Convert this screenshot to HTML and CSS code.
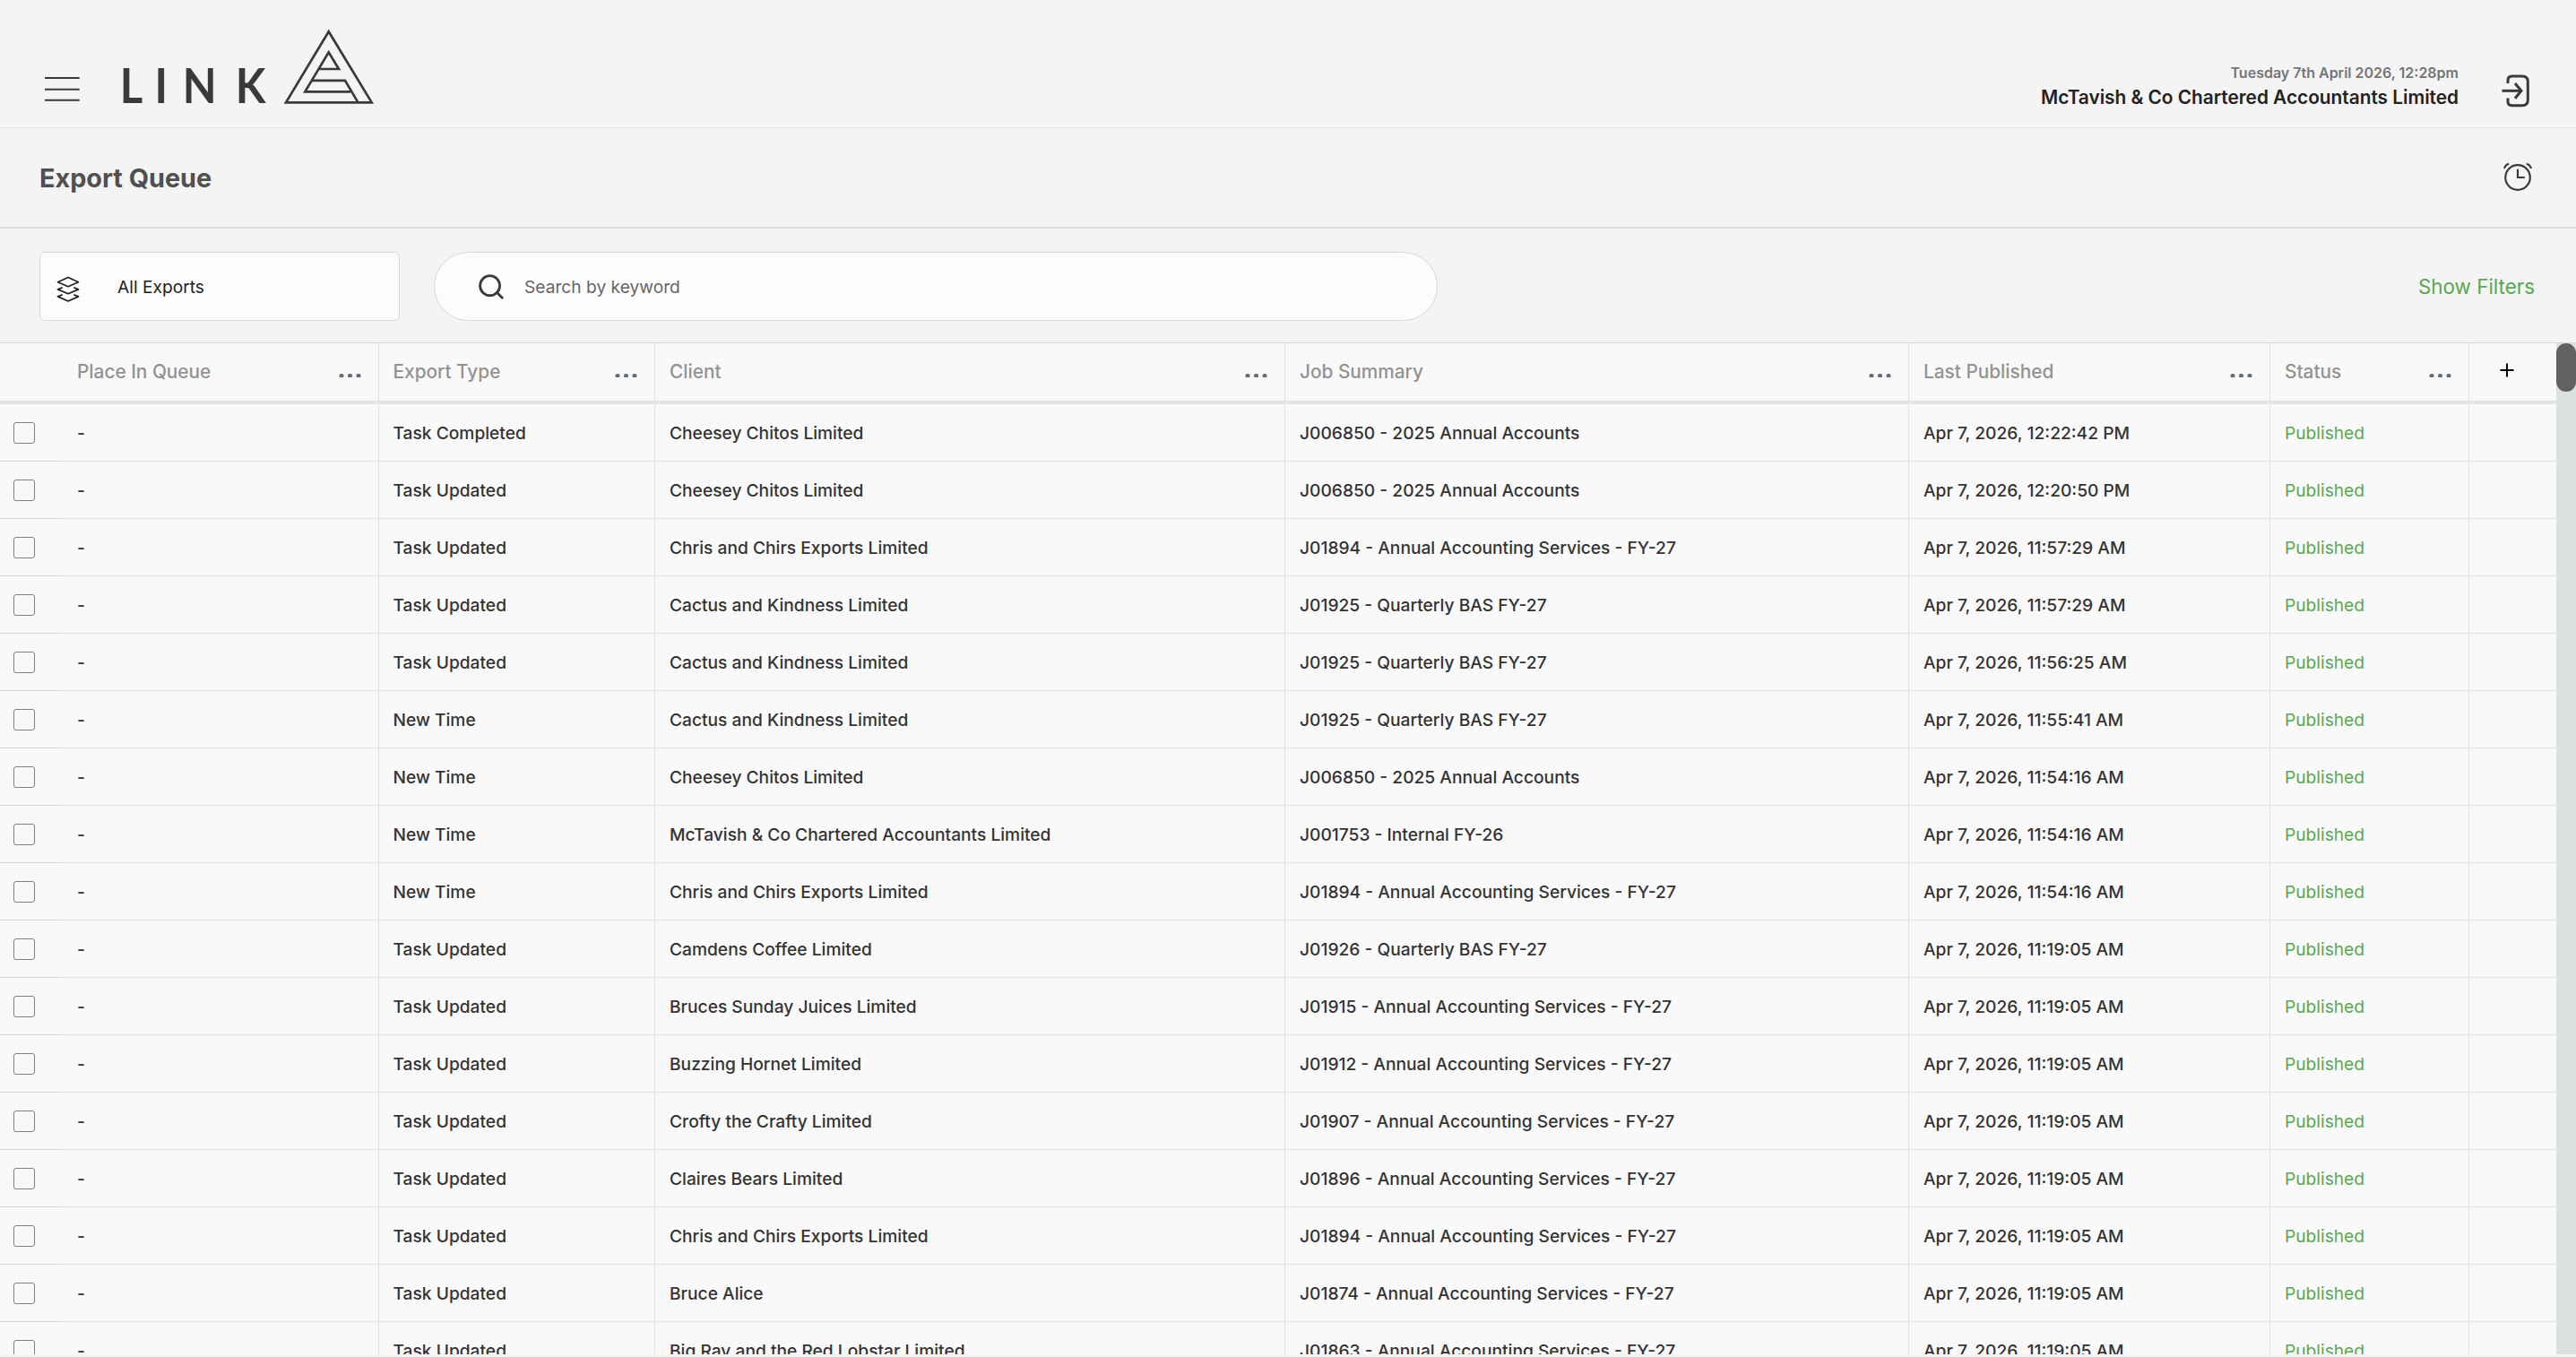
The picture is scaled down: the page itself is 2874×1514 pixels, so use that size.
FILE: index.html
```
<!DOCTYPE html>
<html lang="en">
<head>
  <meta charset="UTF-8">
  <title>Export Queue</title>
  <link rel="stylesheet" href="styles.css">
</head>
<body>

  <header class="topbar">
    <svg class="menu" width="40" height="28" viewBox="0 0 40 28">
      <path d="M0 2H38.700M0 14.700H38.700M0 26.700H38.700" stroke="#3a3a3a" stroke-width="2"/>
    </svg>
    <svg class="logo" width="290" height="90" viewBox="130 30 290 90">
      <text class="logo-text" transform="scale(.92 1)" x="145.400 187.500 221.500 285.600" y="115.300">LINK</text>
      <g fill="none" stroke="#3a3a3a" stroke-width="2.700">
        <path d="M366.700 35.200L319 114.400H414.700Z"/>
        <path d="M355.500 77H378L366.700 58.300L340.300 102.300H391"/>
        <path d="M348 89.800H385L399.500 114.400"/>
      </g>
    </svg>
    <div class="account">
      <div class="date">Tuesday 7th April 2026, 12:28pm</div>
      <div class="company">McTavish &amp; Co Chartered Accountants Limited</div>
    </div>
    <svg class="logout" width="32" height="38" viewBox="0 0 32 38" fill="none" stroke="#3a3a3a" stroke-width="3">
      <path d="M7 11V7.500Q7 3 11.500 3H23Q29.300 3 29.300 9V29.500Q29.300 35.700 23 35.700H11.500Q7 35.700 7 31.500V27.500"/>
      <path d="M.500 19.300H22"/>
      <path d="M15 11L22 19.300L15 27.700"/>
    </svg>
  </header>

  <div class="titlebar">
    <h1>Export Queue</h1>
    <svg width="32" height="32" viewBox="0 0 32 32" fill="none" stroke="#3a3a3a" stroke-width="2.200" stroke-linecap="round">
      <circle cx="16" cy="17" r="13.800"/>
      <path d="M16 8.500V17H23M1.300 6Q2.500 3 5.300 2M26.700 2Q29.500 3 30.700 6"/>
    </svg>
  </div>

  <div class="toolbar">
    <div class="select">
      <svg width="26" height="30" viewBox="0 0 26 30" fill="none" stroke="#222" stroke-width="1.700" stroke-linejoin="round">
        <path d="M13 1.500L24.500 6.700L13 11.700L1.500 6.700Z"/>
        <path d="M6.800 12.700L1.500 14.900L13 19.800L24.500 14.900L19.200 12.700"/>
        <path d="M6.800 20.700L1.500 22.900L13 28L24.500 22.900L19.200 20.700"/>
      </svg>
      <span>All Exports</span>
    </div>
    <div class="search">
      <svg width="28" height="28" viewBox="0 0 28 28" fill="none" stroke="#3a3a3a" stroke-width="2.800" stroke-linecap="round">
        <circle cx="12.600" cy="12.700" r="11"/>
        <path d="M20.500 20.500L26.300 26.300"/>
      </svg>
      <span>Search by keyword</span>
    </div>
    <a class="show-filters">Show Filters</a>
  </div>

  <div class="grid">
    <div class="grid-scroll">
      <table id="exportTable">
        <colgroup>
          <col class="c-check"><col class="c-place"><col class="c-type"><col class="c-client">
          <col class="c-job"><col class="c-date"><col class="c-status"><col class="c-add">
        </colgroup>
        <thead>
          <tr>
            <th></th>
            <th><div>Place In Queue<i class="dots"></i></div></th>
            <th><div>Export Type<i class="dots"></i></div></th>
            <th><div>Client<i class="dots"></i></div></th>
            <th><div>Job Summary<i class="dots"></i></div></th>
            <th><div>Last Published<i class="dots"></i></div></th>
            <th><div>Status<i class="dots"></i></div></th>
            <th class="add"><svg width="16" height="16" viewBox="0 0 16 16"><path d="M8 .500V15.500M.500 8H15.500" stroke="#000" stroke-width="2"/></svg></th>
          </tr>
        </thead>
        <tbody></tbody>
      </table>
    </div>
    <div class="scrollbar"><div class="thumb"></div></div>
  </div>

  <script>
    const rows = [
      ['Task Completed', 'Cheesey Chitos Limited', 'J006850 - 2025 Annual Accounts', '12:22:42 PM'],
      ['Task Updated', 'Cheesey Chitos Limited', 'J006850 - 2025 Annual Accounts', '12:20:50 PM'],
      ['Task Updated', 'Chris and Chirs Exports Limited', 'J01894 - Annual Accounting Services - FY-27', '11:57:29 AM'],
      ['Task Updated', 'Cactus and Kindness Limited', 'J01925 - Quarterly BAS FY-27', '11:57:29 AM'],
      ['Task Updated', 'Cactus and Kindness Limited', 'J01925 - Quarterly BAS FY-27', '11:56:25 AM'],
      ['New Time', 'Cactus and Kindness Limited', 'J01925 - Quarterly BAS FY-27', '11:55:41 AM'],
      ['New Time', 'Cheesey Chitos Limited', 'J006850 - 2025 Annual Accounts', '11:54:16 AM'],
      ['New Time', 'McTavish & Co Chartered Accountants Limited', 'J001753 - Internal FY-26', '11:54:16 AM'],
      ['New Time', 'Chris and Chirs Exports Limited', 'J01894 - Annual Accounting Services - FY-27', '11:54:16 AM'],
      ['Task Updated', 'Camdens Coffee Limited', 'J01926 - Quarterly BAS FY-27', '11:19:05 AM'],
      ['Task Updated', 'Bruces Sunday Juices Limited', 'J01915 - Annual Accounting Services - FY-27', '11:19:05 AM'],
      ['Task Updated', 'Buzzing Hornet Limited', 'J01912 - Annual Accounting Services - FY-27', '11:19:05 AM'],
      ['Task Updated', 'Crofty the Crafty Limited', 'J01907 - Annual Accounting Services - FY-27', '11:19:05 AM'],
      ['Task Updated', 'Claires Bears Limited', 'J01896 - Annual Accounting Services - FY-27', '11:19:05 AM'],
      ['Task Updated', 'Chris and Chirs Exports Limited', 'J01894 - Annual Accounting Services - FY-27', '11:19:05 AM'],
      ['Task Updated', 'Bruce Alice', 'J01874 - Annual Accounting Services - FY-27', '11:19:05 AM'],
      ['Task Updated', 'Big Ray and the Red Lobstar Limited', 'J01863 - Annual Accounting Services - FY-27', '11:19:05 AM']
    ];

    const tbody = document.querySelector('#exportTable tbody');
    rows.forEach(([type, client, job, time]) => {
      const tr = document.createElement('tr');
      tr.innerHTML = `
        <td><span class="checkbox"></span></td>
        <td>-</td>
        <td>${type}</td>
        <td>${client.replace('&', '&amp;')}</td>
        <td>${job}</td>
        <td>Apr 7, 2026, ${time}</td>
        <td class="published">Published</td>
        <td></td>
      `;
      tbody.appendChild(tr);
    });
  </script>

</body>
</html>
```
FILE: styles.css
```
* {
  box-sizing: border-box;
}

body {
  margin: 0;
  height: 1514px;
  overflow: hidden;
  font-family: Inter, "Liberation Sans", sans-serif;
  font-size: 19.2px;
  color: #333;
  background: #f4f4f4;
}

svg {
  display: block;
  flex: none;
}

/* top bar */
.topbar {
  display: flex;
  align-items: flex-end;
  height: 143px;
  padding: 0 51px 0 50px;
  border-bottom: 1px solid #e3e3e3;
}
.menu {
  margin-bottom: 29px;
}
.logo {
  margin-left: 40px;
  margin-bottom: 22px;
  overflow: visible;
}
.logo-text {
  font-family: Lato, sans-serif;
  font-size: 53.5px;
  font-weight: 700;
  fill: #3a3a3a;
}
.account {
  margin-left: auto;
  margin-bottom: 20px;
  text-align: right;
  line-height: 27px;
}
.date {
  font-size: 16px;
  font-weight: 600;
  color: #757575;
}
.company {
  font-size: 20.8px;
  font-weight: 600;
  color: #222;
}
.logout {
  margin-left: 48px;
  margin-bottom: 22px;
}

/* page title */
.titlebar {
  display: flex;
  align-items: center;
  justify-content: space-between;
  height: 112px;
  padding: 0 49px 2px 44px;
  border-bottom: 2px solid #dcdcdc;
}
h1 {
  margin: 2px 0 0;
  font-size: 28.8px;
  font-weight: 700;
  color: #505050;
}

/* filters */
.toolbar {
  display: flex;
  align-items: center;
  height: 127px;
  padding: 2px 46px 0 44px;
}
.select, .search {
  display: flex;
  align-items: center;
  height: 77px;
  background: #fcfcfc;
  border: 1px solid #d8d8d8;
}
.select {
  width: 402px;
  padding-left: 18px;
  border-radius: 6px;
  color: #222;
}
.select svg {
  margin-top: 7px;
}
.select span {
  margin-left: 42px;
}
.search {
  width: 1120px;
  margin-left: 38px;
  padding-left: 49px;
  border-radius: 39px;
  color: #666;
}
.search span {
  margin-left: 23px;
}
.show-filters {
  margin-left: auto;
  font-size: 22.4px;
  color: #59a850;
}

/* table */
.grid {
  display: flex;
  height: 1129px;
  overflow: hidden;
  border-top: 1px solid #d8d8d8;
}
.grid-scroll {
  width: 2852px;
  overflow: hidden;
}
table {
  width: 2852px;
  table-layout: fixed;
  border-collapse: separate;
  border-spacing: 0;
  background: #f9f9f9;
}
.c-check { width: 70px; }
.c-place { width: 353px; }
.c-type { width: 308px; }
.c-client { width: 703px; }
.c-job { width: 696px; }
.c-date { width: 403px; }
.c-status { width: 222px; }
.c-add { width: 97px; }

th, td {
  height: 64px;
  padding: 0 0 0 16px;
  text-align: left;
  white-space: nowrap;
  border-right: 1px solid #e3e3e3;
  border-bottom: 1px solid #e3e3e3;
}
th {
  height: 68px;
  padding-bottom: 2px;
  font-size: 20.8px;
  font-weight: 500;
  color: #929292;
  border-bottom: 4px solid #e4e4e4;
}
td {
  font-weight: 500;
}
th:first-child, td:first-child {
  padding-left: 15px;
  border-right: none;
}
td:first-child {
  border-bottom-color: #d6d6d6;
}
th:nth-child(3), td:nth-child(3) {
  padding-left: 15.5px;
}
th:last-child, td:last-child {
  border-right: none;
}
th div {
  display: flex;
  align-items: center;
  justify-content: space-between;
  padding-right: 20px;
}
/* three dots: the middle one plus two copies */
.dots {
  width: 5px;
  height: 4px;
  margin: 10px 9.500px 0 0;
  border-radius: 2px 2px 1px 1px;
  background: #646c76;
  box-shadow: -9.500px 0 #646c76, 9.500px 0 #646c76;
}
.add svg {
  margin: -2px 0 0 18px;
}
.checkbox {
  display: block;
  width: 24px;
  height: 24px;
  border: 1px solid #808080;
  border-radius: 3px;
}
td.published {
  font-weight: 400;
  color: #59a850;
}
.scrollbar {
  width: 22px;
  background: #dce1dd;
}
.thumb {
  height: 54px;
  border-radius: 11px;
  background: #616161;
}
```
